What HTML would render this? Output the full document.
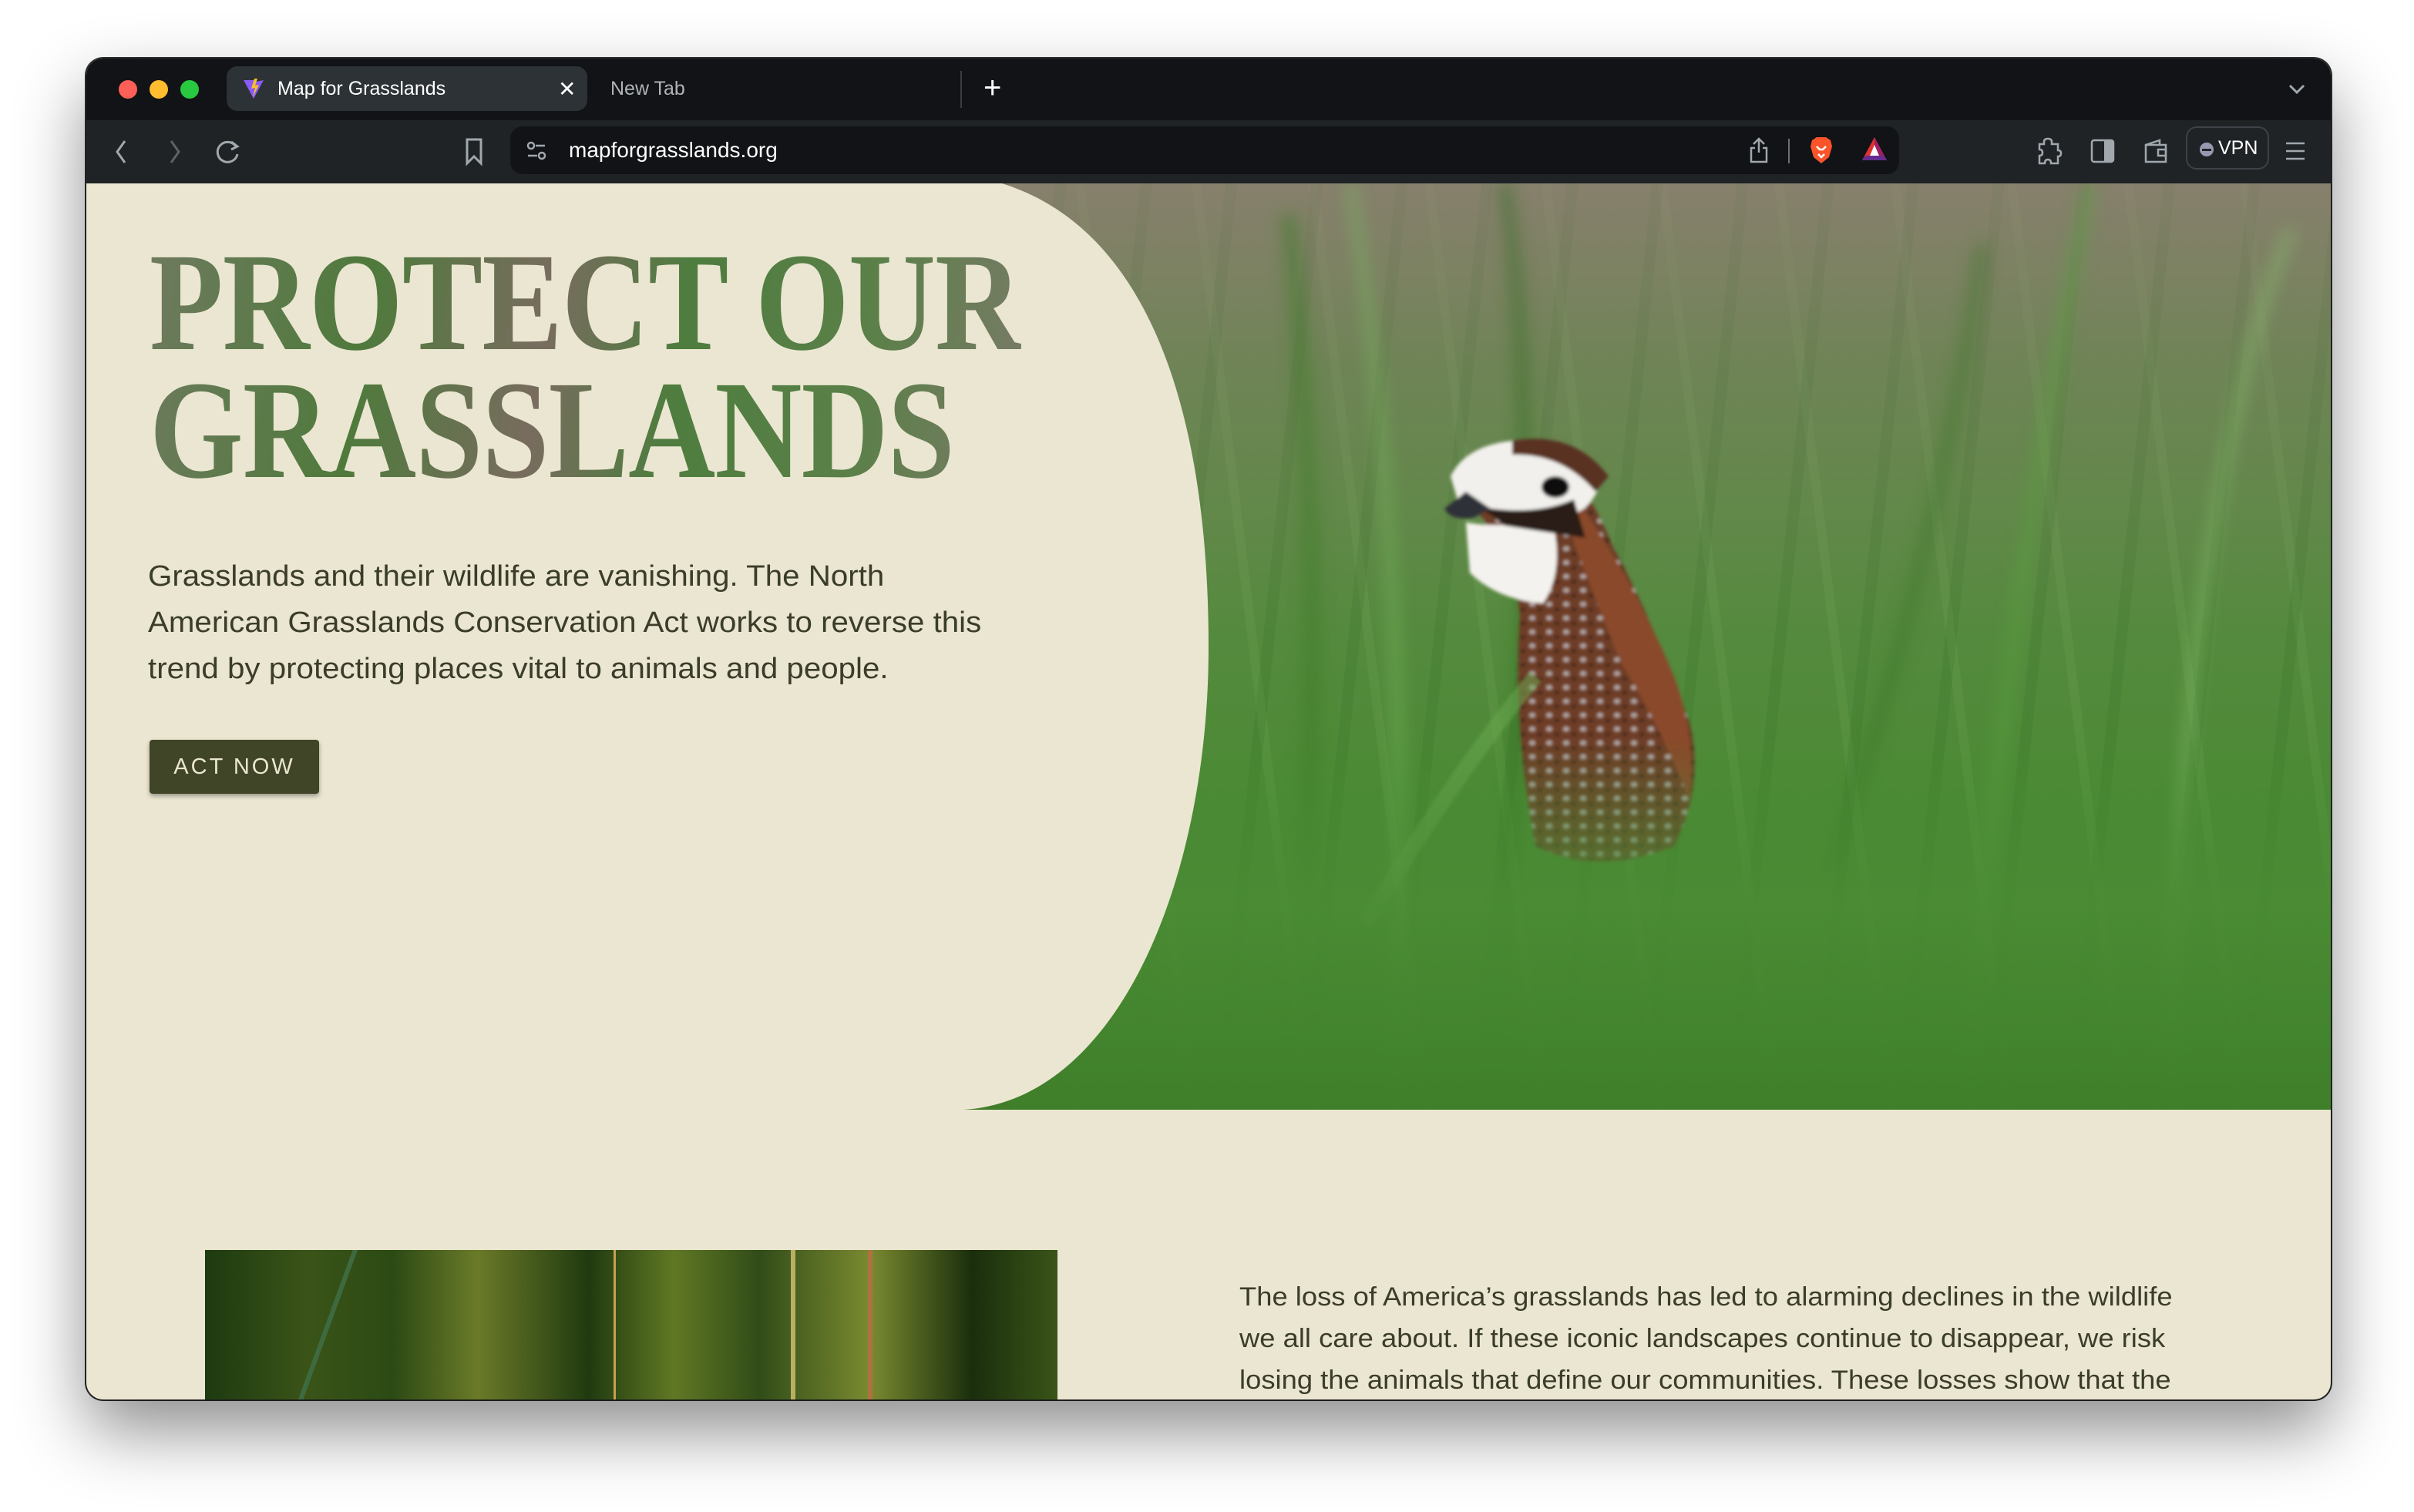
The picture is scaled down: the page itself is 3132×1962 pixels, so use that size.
<!DOCTYPE html>
<html><head><meta charset="utf-8">
<style>
*{margin:0;padding:0;box-sizing:border-box}
html,body{width:3132px;height:1962px;background:#fff;overflow:hidden;font-family:"Liberation Sans",sans-serif}
.win{position:absolute;left:112px;top:76px;width:2912px;height:1740px;border-radius:22px;overflow:hidden;background:#ebe6d1;box-shadow:0 40px 90px rgba(0,0,0,.45),0 0 0 2px #2a2c2e}
.tabbar{position:absolute;left:0;top:0;width:100%;height:80px;background:#111316}
.toolbar{position:absolute;left:0;top:80px;width:100%;height:82px;background:#1f2326}
.dot{position:absolute;top:28px;width:24px;height:24px;border-radius:50%}
.tab{position:absolute;left:182px;top:10px;width:468px;height:58px;background:#2c3235;border-radius:14px}
.t{position:absolute;color:#fff;font-size:25px}
.url{position:absolute;left:550px;top:8px;width:1802px;height:62px;background:#111316;border-radius:16px}
.content{position:absolute;left:0;top:162px;width:2912px;height:1578px}
.hero{position:absolute;left:0;top:0;width:2912px;height:1202px;overflow:hidden;
background:
linear-gradient(180deg,rgba(150,125,120,.6) 0%,rgba(130,125,100,.35) 20%,rgba(0,0,0,0) 48%),
repeating-linear-gradient(96deg,rgba(30,80,20,0) 0 40px,rgba(40,100,30,.15) 40px 55px,rgba(0,0,0,0) 55px 110px),
repeating-linear-gradient(83deg,rgba(140,190,110,0) 0 70px,rgba(140,190,110,.12) 70px 82px,rgba(0,0,0,0) 82px 150px),
linear-gradient(180deg,#6f845a 0%,#5c8a45 35%,#4c8a35 65%,#3f7d2a 100%)}
h1{position:absolute;left:82px;top:72px;font-family:"Liberation Serif",serif;font-weight:700;font-size:182px;line-height:166px;letter-spacing:-1px;
background:linear-gradient(100deg,#6e7a5e 0%,#4f7a3c 25%,#786c5e 45%,#4e7d3f 60%,#5a8048 80%,#7a7a68 100%);-webkit-background-clip:text;background-clip:text;color:transparent;transform:scaleX(.86);transform-origin:left top;white-space:nowrap}
.p{position:absolute;left:80px;top:480px;font-size:38px;line-height:60px;color:#3a3d2a;white-space:nowrap;transform:scaleX(1.06);transform-origin:left top}
.btn{position:absolute;left:82px;top:722px;width:220px;height:70px;background:#3f4526;border-radius:4px;color:#ebe6d1;font-size:29px;letter-spacing:3px;text-align:center;line-height:70px;box-shadow:0 3px 6px rgba(0,0,0,.35)}
.img2{position:absolute;left:154px;top:1384px;width:1106px;height:200px;
background:
linear-gradient(90deg,rgba(0,0,0,0) 0 530px,#c8a050 530px 533px,rgba(0,0,0,0) 533px 760px,#b8b060 760px 766px,rgba(0,0,0,0) 766px 860px,#b07040 860px 866px,rgba(0,0,0,0) 866px),
linear-gradient(110deg,rgba(0,0,0,0) 0 180px,#3e6a40 180px 186px,rgba(0,0,0,0) 186px),
linear-gradient(90deg,#1e3a10 0%,#3a5418 12%,#2c4a14 22%,#6a7a28 32%,#203a10 45%,#607824 55%,#314c18 65%,#7a8a30 78%,#1a2e0c 90%,#3a5418 100%)}
.p2{position:absolute;left:1496px;top:1418px;font-size:34px;line-height:54px;color:#3a3d2a;white-space:nowrap;transform:scaleX(1.07);transform-origin:left top}
</style></head><body>
<div class="win">
 <div class="tabbar">
  <div class="dot" style="left:42px;background:#fe5f57"></div>
  <div class="dot" style="left:82px;background:#febc2e"></div>
  <div class="dot" style="left:122px;background:#28c840"></div>
  <div class="tab"></div>
  <svg style="position:absolute;left:202px;top:24px" width="30" height="30" viewBox="0 0 30 30"><path d="M2 4 L15 28 L28 4 L18 6 L14 16 L16 4Z" fill="#8a5cf6"/><path d="M16 2 L12 15 L17 14 L14 26 L22 10 L17 11 L20 2Z" fill="#fbbf24"/></svg>
  <div class="t" style="left:248px;top:25px">Map for Grasslands</div>
  <div class="t" style="left:612px;top:23px;font-size:28px">✕</div>
  <div class="t" style="left:680px;top:25px;color:#b0b4b8">New Tab</div>
  <div style="position:absolute;left:1134px;top:16px;width:2px;height:48px;background:#3a3e42"></div>
  <div class="t" style="left:1164px;top:16px;font-size:40px;font-weight:300">+</div>
  <svg style="position:absolute;left:2856px;top:30px" width="24" height="20"><path d="M3 5 L12 14 L21 5" stroke="#a0a8ae" stroke-width="3" fill="none"/></svg>
 </div>
 <div class="toolbar">
  <svg style="position:absolute;left:36px;top:24px" width="20" height="34"><path d="M14 3 L4 17 L14 31" stroke="#a0a8ae" stroke-width="3" fill="none"/></svg>
  <svg style="position:absolute;left:104px;top:24px" width="20" height="34"><path d="M6 3 L16 17 L6 31" stroke="#5c6268" stroke-width="3" fill="none"/></svg>
  <svg style="position:absolute;left:166px;top:24px" width="36" height="36"><path d="M28 10 A13 13 0 1 0 30 20" stroke="#a0a8ae" stroke-width="3" fill="none"/><path d="M22 4 L30 10 L22 14" stroke="#a0a8ae" stroke-width="3" fill="none"/></svg>
  <svg style="position:absolute;left:490px;top:22px" width="26" height="38"><path d="M4 3 H22 V34 L13 25 L4 34Z" stroke="#a0a8ae" stroke-width="3" fill="none"/></svg>
  <div class="url">
   <svg style="position:absolute;left:20px;top:18px" width="28" height="28"><circle cx="7" cy="7" r="4" stroke="#a0a8ae" stroke-width="2.5" fill="none"/><path d="M13 7 H25 M3 20 H15" stroke="#a0a8ae" stroke-width="2.5"/><circle cx="21" cy="20" r="4" stroke="#a0a8ae" stroke-width="2.5" fill="none"/></svg>
   <div class="t" style="left:76px;top:15px;font-size:28px">mapforgrasslands.org</div>
   <svg style="position:absolute;left:1606px;top:14px" width="28" height="34"><path d="M14 2 V20 M7 9 L14 2 L21 9 M9 14 H4 V32 H24 V14 H19" stroke="#a0a8ae" stroke-width="2.5" fill="none"/></svg>
   <div style="position:absolute;left:1658px;top:16px;width:2px;height:32px;background:#6a7076"></div>
   <svg style="position:absolute;left:1684px;top:12px" width="34" height="38"><path d="M5 6 L11 2 H23 L29 6 L31 14 L27 28 L17 36 L7 28 L3 14Z" fill="#fb542b"/><path d="M11 14 L15 18 H19 L23 14 M13 24 L17 28 L21 24" stroke="#fff" stroke-width="2.5" fill="none"/></svg>
   <svg style="position:absolute;left:1752px;top:12px" width="36" height="34"><path d="M18 2 L34 32 H2Z" fill="#e0332c"/><path d="M18 2 L34 32 H18Z" fill="#9e1f63"/><path d="M2 32 H34 L30 26 H6Z" fill="#662d91"/><path d="M18 12 L24 26 H12Z" fill="#fff"/></svg>
  </div>
  <svg style="position:absolute;left:2530px;top:22px" width="34" height="38"><path d="M10 6 Q10 2 15 2 Q20 2 20 6 V9 H28 V17 Q32 17 32 21 Q32 25 28 25 V34 H19 Q19 29 15 29 Q11 29 11 34 H4 V24 Q8 24 8 20 Q8 16 4 16 V9 H10Z" stroke="#a0a8ae" stroke-width="2.5" fill="none"/></svg>
  <svg style="position:absolute;left:2600px;top:24px" width="32" height="32"><rect x="2" y="2" width="28" height="28" rx="3" stroke="#a0a8ae" stroke-width="2.5" fill="none"/><rect x="18" y="2" width="12" height="28" fill="#a0a8ae"/></svg>
  <svg style="position:absolute;left:2668px;top:24px" width="34" height="32"><path d="M4 8 L22 2 V8 M4 8 H30 V30 H4Z" stroke="#a0a8ae" stroke-width="2.5" fill="none"/><rect x="20" y="14" width="10" height="8" stroke="#a0a8ae" stroke-width="2.5" fill="none"/></svg>
  <div style="position:absolute;left:2724px;top:8px;width:108px;height:56px;border:2px solid #3c4248;border-radius:14px"></div>
  <div style="position:absolute;left:2742px;top:29px;width:18px;height:18px;border-radius:50%;background:#9a98b0"></div>
  <div style="position:absolute;left:2745px;top:37px;width:12px;height:3px;background:#1f2326"></div>
  <div class="t" style="left:2766px;top:22px;font-size:25px">VPN</div>
  <svg style="position:absolute;left:2852px;top:26px" width="28" height="28"><path d="M2 4 H26 M2 14 H26 M2 24 H26" stroke="#a0a8ae" stroke-width="2.5"/></svg>
 </div>
 <div class="content">
  <div class="hero">
   <svg style="position:absolute;left:0;top:0" width="2912" height="1202">
    <defs>
     <linearGradient id="fade" x1="0" y1="0" x2="0" y2="1"><stop offset="0" stop-color="#4a8c34" stop-opacity="0"/><stop offset=".45" stop-color="#4a8c34" stop-opacity=".85"/><stop offset="1" stop-color="#3f7f2a" stop-opacity="1"/></linearGradient>
     <filter id="b"><feGaussianBlur stdDeviation="10"/></filter>
     <filter id="b2"><feGaussianBlur stdDeviation="2"/></filter>
     <pattern id="spk" width="22" height="18" patternUnits="userSpaceOnUse"><rect width="22" height="18" fill="#6e3c28"/><ellipse cx="6" cy="6" rx="4" ry="3" fill="#d8dce0" opacity=".7"/><ellipse cx="16" cy="13" rx="3" ry="2" fill="#2a1a14"/></pattern>
    </defs>
    <g opacity=".5" filter="url(#b)">
     <path d="M1560 1202 Q1620 600 1560 40" stroke="#3e7a28" stroke-width="22" fill="none"/>
     <path d="M1700 1202 Q1720 500 1640 0" stroke="#7ab860" stroke-width="14" fill="none"/>
     <path d="M2440 1202 Q2480 600 2600 0" stroke="#5aa040" stroke-width="18" fill="none"/>
     <path d="M2700 1202 Q2720 400 2860 60" stroke="#8ac070" stroke-width="14" fill="none"/>
     <path d="M2260 900 Q2400 500 2460 80" stroke="#3b7326" stroke-width="16" fill="none"/>
     <path d="M1820 1202 Q1900 400 1840 0" stroke="#2f6a1e" stroke-width="16" fill="none"/>
    </g>
    <g filter="url(#b2)">
     <path d="M1800 420 Q1850 480 1860 560 Q1850 700 1880 860 Q1960 900 2060 860 Q2100 780 2080 700 Q2030 560 1980 470 Q1940 370 1880 335 Q1820 340 1800 420Z" fill="url(#spk)"/>
     <path d="M1940 420 Q2010 520 2060 640 Q2090 720 2080 800 Q2040 700 1990 620 Q1950 520 1920 440Z" fill="#8a4a2c"/>
     <path d="M1770 380 Q1790 340 1850 334 Q1930 340 1960 400 Q1940 440 1890 432 Q1830 424 1780 414Z" fill="#f2f0ec"/>
     <path d="M1790 440 Q1850 450 1900 430 Q1920 500 1890 545 Q1830 540 1795 505Z" fill="#f4f2ee"/>
     <path d="M1810 420 Q1880 432 1930 410 L1945 460 Q1890 452 1840 444Z" fill="#2a1e18"/>
     <ellipse cx="1906" cy="394" rx="18" ry="14" fill="#111"/>
     <path d="M1790 400 L1762 422 Q1770 438 1800 434 L1822 422Z" fill="#2e3238"/>
     <path d="M1850 334 Q1930 320 1975 380 L1958 400 Q1915 350 1850 352Z" fill="#5a3020"/>
    </g>
    <path d="M1660 960 Q1780 760 1880 640" stroke="#6aa850" stroke-width="20" fill="none" opacity=".55" filter="url(#b2)"/>
    <rect x="1200" y="720" width="1712" height="482" fill="url(#fade)"/>
    <path d="M1188 0 C1380 60 1456 300 1456 602 C1456 900 1340 1190 1138 1202 L0 1202 L0 0Z" fill="#ebe6d1"/>
   </svg>
   <h1>PROTECT OUR<br>GRASSLANDS</h1>
   <div class="p">Grasslands and their wildlife are vanishing. The North<br>American Grasslands Conservation Act works to reverse this<br>trend by protecting places vital to animals and people.</div>
   <div class="btn">ACT NOW</div>
  </div>
  <div class="img2"></div>
  <div class="p2">The loss of America’s grasslands has led to alarming declines in the wildlife<br>we all care about. If these iconic landscapes continue to disappear, we risk<br>losing the animals that define our communities. These losses show that the</div>
 </div>
</div>
</body></html>
